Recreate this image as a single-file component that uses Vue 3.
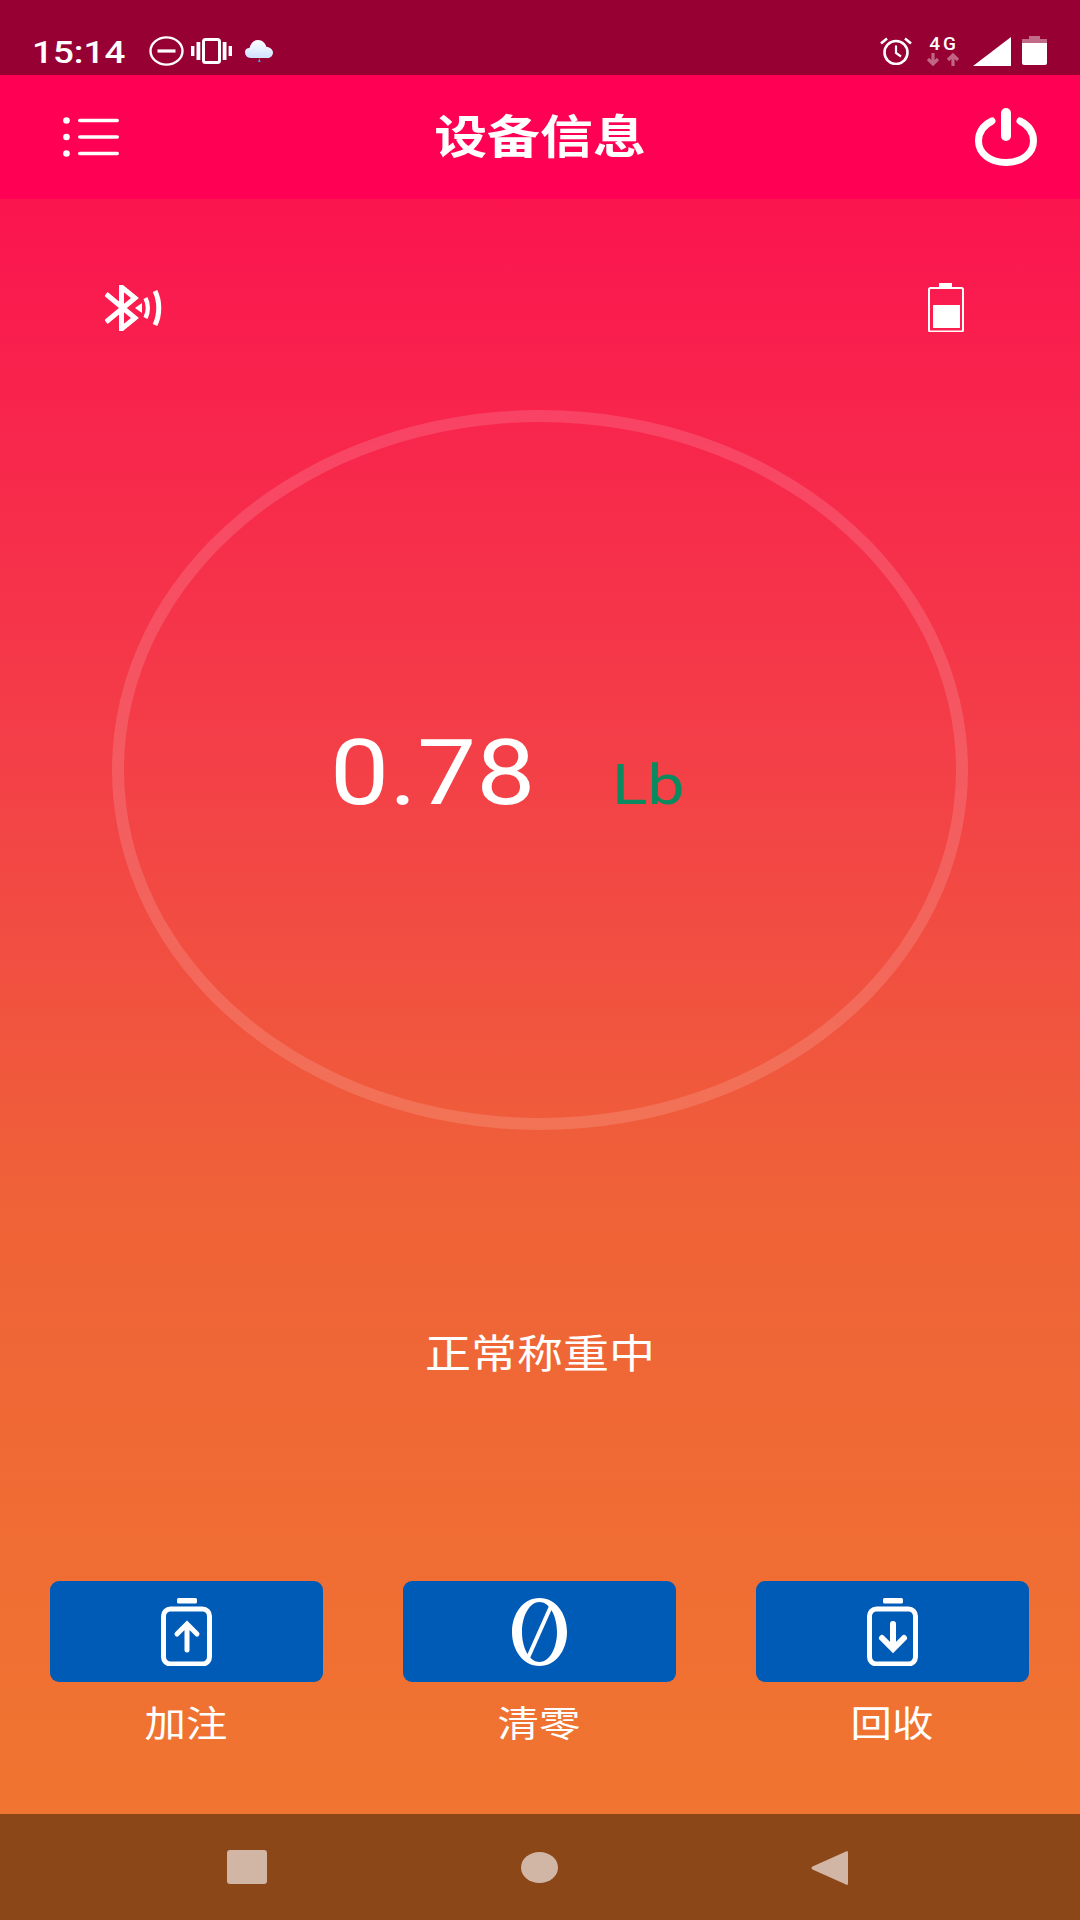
<script setup>
const actions = [
  { label: '加注', kind: 'up' },
  { label: '清零', kind: 'zero' },
  { label: '回收', kind: 'down' }
]
</script>

<template>
  <div class="screen">
    <div class="status">
      <div class="status-left">
        <span class="time">15:14</span>
        <svg class="i-dnd" width="35" height="30" viewBox="0 0 35 30"><ellipse cx="17.5" cy="15" rx="16" ry="13.6" fill="none" stroke="#fff" stroke-width="2.4"/><rect x="8.5" y="13.4" width="18" height="3.2" fill="#fff"/></svg>
        <svg class="i-vib" width="41" height="26" viewBox="0 0 41 26"><rect x="12.5" y="1.5" width="16" height="23" rx="2" fill="none" stroke="#fff" stroke-width="3"/><rect x="0" y="8" width="3.4" height="10" fill="#fff"/><rect x="5.5" y="4" width="3.8" height="18" fill="#fff"/><rect x="31.7" y="4" width="3.8" height="18" fill="#fff"/><rect x="37.6" y="8" width="3.4" height="10" fill="#fff"/></svg>
        <svg class="i-cloud" width="28" height="22" viewBox="0 0 28 22"><defs><linearGradient id="cl" x1="0" y1="0" x2="0" y2="1"><stop offset="0" stop-color="#fff"/><stop offset="1" stop-color="#cfe2ff"/></linearGradient></defs><path d="M6 18 C2 18 0 15 0 12 C0 9.500 2 8 4.500 8 C5.500 3 9 0 13 0 C17.500 0 20.500 3.500 21.500 7 C25 7 28 9.500 28 12.500 C28 15.500 25.500 18 23 18 Z" fill="url(#cl)"/><path d="M14.500 18 L13 22 L15.500 22 Z" fill="#3fa9f5"/></svg>
      </div>
      <div class="status-right">
        <svg class="i-alarm" width="32" height="28" viewBox="0 0 32 28"><circle cx="16" cy="15.500" r="11.500" fill="none" stroke="#fff" stroke-width="2.600"/><path d="M16 8.500 V16 L21 19.500" fill="none" stroke="#fff" stroke-width="2.200"/><path d="M1 6.500 L7 1.500 M31 6.500 L25 1.500" stroke="#fff" stroke-width="2.600"/></svg>
        <div class="net">
          <span class="net-text">4G</span>
          <svg width="34" height="13" viewBox="0 0 34 13"><path d="M7 0 V9 M2 6 L7 11 L12 6" fill="none" stroke="#fff" stroke-opacity=".4" stroke-width="3.200"/><path d="M27 13 V4 M22 7 L27 2 L32 7" fill="none" stroke="#fff" stroke-opacity=".4" stroke-width="3.200"/></svg>
        </div>
        <svg class="i-signal" width="38" height="29" viewBox="0 0 38 29"><path d="M38 0 V29 H0 Z" fill="#fff"/></svg>
        <svg class="i-bat" width="25" height="29" viewBox="0 0 25 29"><path d="M7 0 H18 V3 H25 V9 H0 V3 H7 Z" fill="#fff" fill-opacity=".42"/><path d="M0 7 H25 V27 Q25 29 23 29 H2 Q0 29 0 27 Z" fill="#fff"/></svg>
      </div>
    </div>

    <header class="bar">
      <svg class="menu" width="56" height="40" viewBox="0 0 56 40"><g fill="#fff"><circle cx="3.500" cy="3.500" r="3.300"/><circle cx="3.500" cy="20" r="3.300"/><circle cx="3.500" cy="36.500" r="3.300"/><rect x="15" y="1.700" width="41" height="3.600" rx="1.800"/><rect x="15" y="18.200" width="41" height="3.600" rx="1.800"/><rect x="15" y="34.700" width="41" height="3.600" rx="1.800"/></g></svg>
      <h1 class="title">设备信息</h1>
      <svg width="62" height="58" viewBox="0 0 62 58"><path d="M17 13 C8 17.500 3.500 24.500 3.500 33 C3.500 45.500 15.500 54.500 31 54.500 C46.500 54.500 58.500 45.500 58.500 33 C58.500 24.500 54 17.500 45 13" fill="none" stroke="#fff" stroke-width="7" stroke-linecap="round"/><rect x="26" y="0" width="10" height="33" rx="5" fill="#fff"/></svg>
    </header>

    <main class="main">
      <div class="icons">
        <svg width="58" height="46" viewBox="0 0 58 46"><path d="M1 9 L30 33 L16.500 44 V2 L30 13 L1 37" fill="none" stroke="#fff" stroke-width="5"/><path d="M30 23 L37 18 V28 Z" fill="#fff"/><path d="M40.500 13 C43.500 19 43.500 27 40.500 33" fill="none" stroke="#fff" stroke-width="4.500"/><path d="M50 6 C55 16 55 30 50 40" fill="none" stroke="#fff" stroke-width="5"/></svg>
        <svg width="36" height="49" viewBox="0 0 36 49"><rect x="11" y="0" width="13" height="4" fill="#fff"/><rect x="1" y="5" width="34" height="43.500" rx="1.500" fill="none" stroke="#fff" stroke-width="2"/><rect x="5" y="22" width="27" height="23" fill="#fff"/></svg>
      </div>

      <div class="ring">
        <div class="reading">
          <span class="value">0.78</span>
          <span class="unit">Lb</span>
        </div>
      </div>

      <p class="state">正常称重中</p>

      <div class="actions">
        <div v-for="a in actions" :key="a.label" class="action">
          <button class="btn" type="button">
            <svg v-if="a.kind === 'zero'" width="55" height="68" viewBox="0 0 55 68"><path fill-rule="evenodd" d="M27.500 0 C44 0 55 16 55 34 C55 52 44 68 27.500 68 C11 68 0 52 0 34 C0 16 11 0 27.500 0 Z M27.500 4 C18 4 10 17 10 34 C10 51 18 64 27.500 64 C37 64 45 51 45 34 C45 17 37 4 27.500 4 Z" fill="#fff"/><path d="M40 6 L15 62" stroke="#fff" stroke-width="4"/></svg>
            <svg v-else width="51" height="68" viewBox="0 0 51 68">
              <rect x="16" y="0" width="20" height="5.500" rx="1.500" fill="#fff"/>
              <rect x="2.500" y="11" width="46" height="55" rx="7" fill="none" stroke="#fff" stroke-width="5"/>
              <path v-if="a.kind === 'up'" d="M26 52 V27 M16 36 L26 26 L36 36" fill="none" stroke="#fff" stroke-width="5" stroke-linecap="round"/>
              <path v-else d="M26 26 V50 M15 40 L26 51 L37 40" fill="none" stroke="#fff" stroke-width="6" stroke-linecap="round"/>
            </svg>
          </button>
          <span class="label">{{ a.label }}</span>
        </div>
      </div>
    </main>

    <nav class="nav">
      <svg width="40" height="34" viewBox="0 0 40 34"><rect width="40" height="34" rx="3" fill="#d2b6a5"/></svg>
      <svg class="nav-home" width="37" height="31" viewBox="0 0 37 31"><ellipse cx="18.500" cy="15.500" rx="18.500" ry="15.500" fill="#d2b6a5"/></svg>
      <svg width="37" height="36" viewBox="0 0 37 36"><path d="M35 1.500 Q37 0 37 3 V33 Q37 36 35 34.500 L1.500 19.500 Q-.5 18 1.500 16.500 Z" fill="#d2b6a5"/></svg>
    </nav>
  </div>
</template>

<style scoped>
.screen {
  width: 1080px;
  height: 1920px;
  display: flex;
  flex-direction: column;
  font-family: Roboto, "Noto Sans CJK SC", sans-serif;
  color: #fff;
  overflow: hidden;
}
.status {
  height: 75px;
  flex: none;
  background: #970032;
  display: flex;
  justify-content: space-between;
  padding: 36px 33px 0 32px;
  box-sizing: border-box;
}
.status-left, .status-right {
  display: flex;
  align-items: flex-start;
}
.time {
  width: 117px;
  font-size: 32px;
  line-height: 30px;
  margin-top: 1px;
  font-weight: 500;
  transform: scaleX(1.15);
  transform-origin: left center;
}
.i-vib { margin-left: 7px; margin-top: 2px; }
.i-cloud { margin-left: 13px; margin-top: 4px; }
.i-alarm { margin-top: 1px; }
.net {
  margin-left: 14px;
  width: 34px;
  display: flex;
  flex-direction: column;
  gap: 2px;
  align-items: center;
}
.net-text {
  font-size: 19px;
  line-height: 15px;
  font-weight: 500;
  letter-spacing: 3px;
  padding-left: 2px;
}
.i-signal { margin-left: 13px; margin-top: 1px; }
.i-bat { margin-left: 11px; }
.bar {
  height: 124px;
  flex: none;
  background: #ff0055;
  display: flex;
  align-items: center;
  justify-content: space-between;
  padding: 0 43px 0 63px;
  box-sizing: border-box;
}
.title {
  margin: 0;
  font-size: 46px;
  line-height: 60px;
  font-weight: 700;
  transform: scaleX(1.15);
  position: relative;
  left: -7px;
}
.main {
  flex: 1;
  min-height: 0;
  display: flex;
  flex-direction: column;
  background: linear-gradient(180deg, #fb144f 0%, #f34147 36%, #ef6238 62%, #f07530 100%);
}
.icons {
  margin-top: 84px;
  height: 49px;
  padding: 0 116px 0 105px;
  display: flex;
  justify-content: space-between;
  align-items: center;
}
.ring {
  margin: 78px auto 0;
  width: 856px;
  height: 720px;
  box-sizing: border-box;
  border: 12px solid rgba(255, 255, 255, 0.14);
  border-radius: 50%;
  display: flex;
  align-items: center;
  justify-content: center;
}
.reading {
  display: flex;
  align-items: baseline;
  gap: 98px;
  padding: 8px 56px 0 0;
}
.value {
  font-size: 90px;
  line-height: 100px;
  transform: scaleX(1.17);
}
.unit {
  font-size: 55px;
  line-height: 60px;
  color: #0a8a5e;
  transform: scaleX(1.2);
}
.state {
  margin: 200px 0 0;
  text-align: center;
  font-size: 40px;
  line-height: 50px;
  transform: scaleX(1.15);
}
.actions {
  margin-top: 201px;
  padding: 0 0 0 50px;
  display: flex;
  gap: 80px;
}
.action {
  width: 273px;
  display: flex;
  flex-direction: column;
  align-items: center;
}
.btn {
  width: 100%;
  height: 101px;
  padding: 0;
  border: 0;
  border-radius: 9px;
  background: #005bb7;
  display: flex;
  align-items: center;
  justify-content: center;
}
.label {
  margin-top: 18px;
  font-size: 36px;
  line-height: 50px;
  transform: scaleX(1.15);
}
.nav {
  height: 106px;
  flex: none;
  background: #8c4719;
  box-sizing: border-box;
  padding: 36px 232px 0 227px;
  display: flex;
  justify-content: space-between;
  align-items: flex-start;
}
.nav-home { margin: 2px 0 0 0; }
</style>

<style>
html, body { margin: 0; padding: 0; background: #8c4719; }
</style>
